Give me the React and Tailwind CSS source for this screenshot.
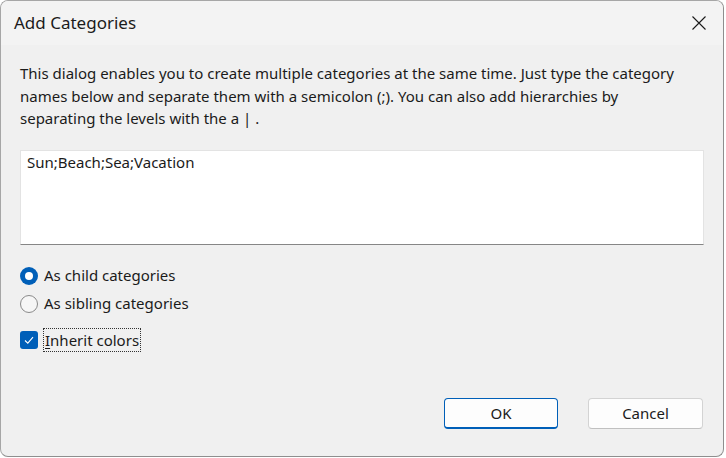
import React, { useState } from 'react';

function CloseIcon() {
  return (
    <svg width="16" height="16" viewBox="0 0 16 16" fill="none" stroke="#1a1a1a" strokeWidth="1.1">
      <path d="M1.5 1.5 L14.5 14.5 M14.5 1.5 L1.5 14.5" />
    </svg>
  );
}

function Radio({ checked, label, onClick }) {
  return (
    <div className="flex items-center h-[28px] cursor-default" onClick={onClick}>
      {checked ? (
        <span className="w-[18px] h-[18px] rounded-full bg-[#005fb8] flex items-center justify-center">
          <span className="w-[8px] h-[8px] rounded-full bg-white" />
        </span>
      ) : (
        <span className="w-[18px] h-[18px] rounded-full border border-[#8a8a8a] bg-[#f6f6f6]" />
      )}
      <span className="ml-[6px]">{label}</span>
    </div>
  );
}

export default function App() {
  const [mode, setMode] = useState('child');
  const [inherit, setInherit] = useState(true);

  return (
    <div className="w-[726px] h-[458px] bg-white font-['Segoe_UI','Noto_Sans',sans-serif] text-[15px] text-[#1b1b1b]">
      <div className="w-[724px] h-[457px] flex flex-col rounded-[8px] border border-[#a6a6a6] border-r-[#8e8e8e] border-b-[#8e8e8e] overflow-hidden bg-[#f0f0f0]">
        {/* Title bar */}
        <div className="h-[44px] shrink-0 bg-[#f3f3f3] flex items-center justify-between pl-[13px] pr-[16px]">
          <span className="text-[17px] leading-none mt-[-2px]">Add Categories</span>
          <CloseIcon />
        </div>

        {/* Body */}
        <div className="flex-1 flex flex-col px-[19px] pt-[17px]">
          <p className="leading-[22.5px]">
            This dialog enables you to create multiple categories at the same time. Just type the category
            <br />
            names below and separate them with a semicolon (;). You can also add hierarchies by
            <br />
            separating the levels with the a | .
          </p>

          <div className="mt-[20px] h-[95px] bg-white border border-[#e3e3e3] border-b-[#868686] px-[6px] pt-0">
            Sun;Beach;Sea;Vacation
          </div>

          <div className="mt-[17px] flex flex-col">
            <Radio checked={mode === 'child'} label="As child categories" onClick={() => setMode('child')} />
            <Radio checked={mode === 'sibling'} label="As sibling categories" onClick={() => setMode('sibling')} />
          </div>

          <div className="mt-[10px] flex items-center cursor-default" onClick={() => setInherit(!inherit)}>
            <span className="w-[18px] h-[18px] rounded-[3px] bg-[#005fb8] flex items-center justify-center">
              {inherit && (
                <svg width="12" height="12" viewBox="0 0 12 12" fill="none" stroke="white" strokeWidth="1.1">
                  <path d="M2 6.5 L4.8 9.2 L10 3.2" />
                </svg>
              )}
            </span>
            <span className="ml-[5px] px-[1px] border border-dotted border-[#333]">
              <span className="underline underline-offset-2">I</span>nherit colors
            </span>
          </div>

          <div className="mt-auto mb-[27px] flex justify-end gap-[30px] pr-[1px]">
            <button className="w-[114px] h-[31px] rounded-[4px] bg-[#fdfdfd] border border-[#005fb8] border-b-2 text-[15px]">
              OK
            </button>
            <button className="w-[115px] h-[31px] rounded-[4px] bg-[#fdfdfd] border border-[#d3d3d3] border-b-[#c0c0c0] text-[15px]">
              Cancel
            </button>
          </div>
        </div>
      </div>
    </div>
  );
}
